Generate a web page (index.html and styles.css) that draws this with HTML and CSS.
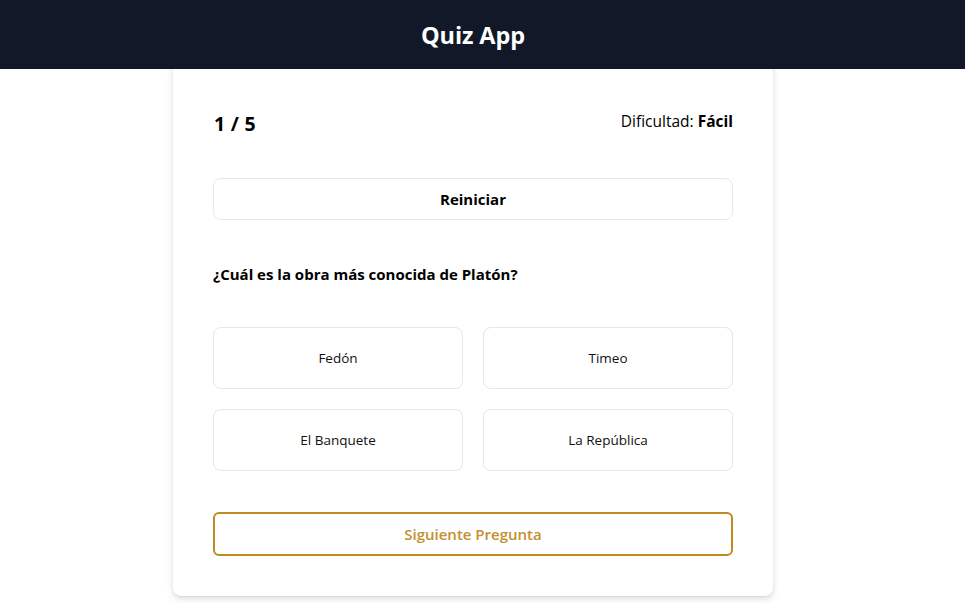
FILE: index.html
```html
<!DOCTYPE html>
<html lang="es">
<head>
<meta charset="utf-8">
<title>Quiz App</title>
<link rel="stylesheet" href="styles.css">
</head>
<body>
<header class="topbar"><h1 class="title">Quiz App</h1></header>
<div class="page">
<main class="card">
  <div class="meta">
    <span class="count">1 / 5</span>
    <span class="level">Dificultad: <strong>Fácil</strong></span>
  </div>
  <button class="restart">Reiniciar</button>
  <p class="question">¿Cuál es la obra más conocida de Platón?</p>
  <div class="options">
    <button class="option">Fedón</button>
    <button class="option">Timeo</button>
    <button class="option">El Banquete</button>
    <button class="option">La República</button>
  </div>
  <button class="next">Siguiente Pregunta</button>
</main>
</div>
</body>
</html>
```
FILE: styles.css
```css
* { box-sizing: border-box; }
html, body { margin: 0; padding: 0; background: #ffffff; }
body { font-family: "Open Sans", "Noto Sans", sans-serif; color: #000; }
.topbar {
  position: relative;
  z-index: 1;
  height: 69px;
  padding-right: 19px;
  background: #111827;
  display: flex;
  align-items: center;
  justify-content: center;
}
.title {
  margin: 0;
  color: #fff;
  font-size: 23.5px;
  font-weight: 700;
  letter-spacing: -0.1px;
}
.page {
  padding-right: 19px;
  padding-bottom: 8px;
}
.card {
  width: 600px;
  margin: -10px auto 0;
  padding: 50px 40px 40px;
  background: #fff;
  border-radius: 8px;
  box-shadow: 0 3px 7px rgba(0,0,0,0.13), 0 1px 2px rgba(0,0,0,0.06);
  display: flex;
  flex-direction: column;
}
.meta {
  display: flex;
  justify-content: space-between;
  align-items: center;
  height: 28px;
}
.count { font-size: 19.5px; font-weight: 700; letter-spacing: 0.3px; margin-left: 1px; }
.level { font-size: 15.5px; margin-top: -4px; }
.level strong { font-weight: 700; }
button { font-family: inherit; cursor: pointer; background: #fff; color: #000; }
.restart {
  margin-top: 41px;
  height: 42px;
  border: 1px solid #e5e7eb;
  border-radius: 8px;
  font-size: 15px;
  font-weight: 700;
}
.question {
  margin: 42px 0 0;
  font-size: 15px;
  font-weight: 700;
  line-height: 24px;
}
.options {
  margin-top: 41px;
  display: grid;
  grid-template-columns: 1fr 1fr;
  gap: 20px;
}
.option {
  height: 62px;
  border: 1px solid #e5e7eb;
  border-radius: 8px;
  font-size: 13.5px;
  font-weight: 500;
  color: #111;
}
.next {
  margin-top: 41px;
  height: 44px;
  border: 2px solid #c0891d;
  border-radius: 6px;
  color: #c38f2f;
  font-size: 15px;
  font-weight: 600;
}
```
